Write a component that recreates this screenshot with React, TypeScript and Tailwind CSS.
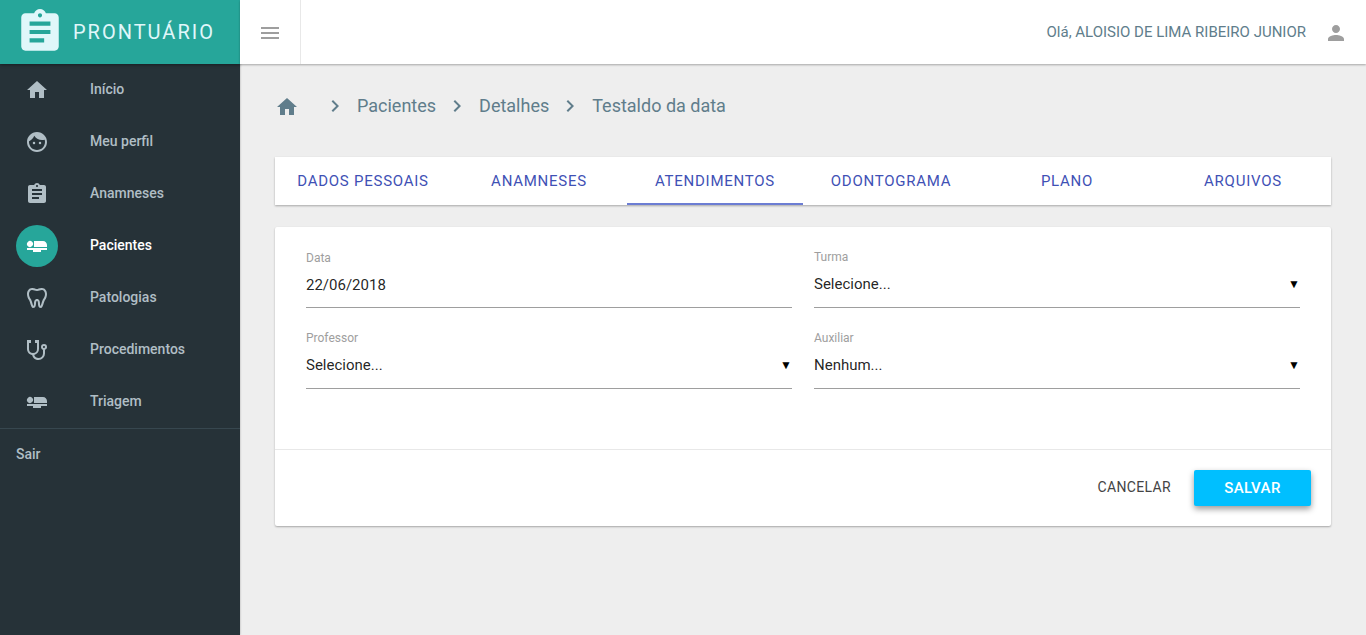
import React from "react";
import {
  MdAirlineSeatFlat,
  MdAssignment,
  MdChevronRight,
  MdFace,
  MdHome,
  MdMenu,
  MdPerson,
} from "react-icons/md";

const ToothIcon = () => (
  <svg viewBox="0 0 24 24" className="size-6" fill="currentColor" aria-hidden="true">
    <path d="M7,2C4,2 2,5 2,8C2,10.11 3,13 4,14C5,15 6,22 8,22C12.54,22 10,15 12,15C14,15 11.46,22 16,22C18,22 19,15 20,14C21,13 22,10.11 22,8C22,5 20,2 17,2C14,2 14,3 12,3C10,3 10,2 7,2M7,4C9,4 10,5 12,5C14,5 15,4 17,4C18.67,4 20,6 20,8C20,9.75 19.14,12.11 18.19,13.06C17.33,13.92 16.06,19.94 15.5,19.94C15.29,19.94 15,18.88 15,17.59C15,15.55 14.43,13 12,13C9.57,13 9,15.55 9,17.59C9,18.88 8.71,19.94 8.5,19.94C7.94,19.94 6.67,13.92 5.81,13.06C4.86,12.11 4,9.75 4,8C4,6 5.33,4 7,4Z" />
  </svg>
);

const StethoscopeIcon = () => (
  <svg viewBox="0 0 24 24" className="size-6" fill="currentColor" aria-hidden="true">
    <path d="M19,8C19.56,8 20,8.43 20,9A1,1 0 0,1 19,10C18.43,10 18,9.55 18,9C18,8.43 18.43,8 19,8M2,2V11C2,13.96 4.19,16.5 7.14,16.91C7.76,19.92 10.42,22 13.5,22A6.5,6.5 0 0,0 20,15.5V11.81C21.16,11.39 22,10.29 22,9A3,3 0 0,0 19,6A3,3 0 0,0 16,9C16,10.29 16.84,11.4 18,11.81V15.41C18,17.91 16,19.91 13.5,19.91C11.5,19.91 9.82,18.7 9.22,16.9C12,16.3 14,13.8 14,11V2H10V5H12V11A4,4 0 0,1 8,15A4,4 0 0,1 4,11V5H6V2H2Z" />
  </svg>
);

const menu = [
  { label: "Início", icon: <MdHome className="size-6" /> },
  { label: "Meu perfil", icon: <MdFace className="size-6" /> },
  { label: "Anamneses", icon: <MdAssignment className="size-6" /> },
  { label: "Pacientes", icon: <MdAirlineSeatFlat className="size-6" />, active: true },
  { label: "Patologias", icon: <ToothIcon /> },
  { label: "Procedimentos", icon: <StethoscopeIcon /> },
  { label: "Triagem", icon: <MdAirlineSeatFlat className="size-6" /> },
];

const crumbs = ["Pacientes", "Detalhes", "Testaldo da data"];

const tabs = ["Dados pessoais", "Anamneses", "Atendimentos", "Odontograma", "Plano", "Arquivos"];

const controlClass =
  "block h-[42px] w-full appearance-none border-b border-[#9e9e9e] bg-transparent pb-1 text-[15px] text-black/87 outline-none";

function SelectField({ id, label, option }: { id: string; label: string; option: string }) {
  return (
    <div>
      <label htmlFor={id} className="block pb-0.5 text-[12px] leading-[14px] text-[#9e9e9e]">
        {label}
      </label>
      <div className="relative">
        <select id={id} className={controlClass}>
          <option>{option}</option>
        </select>
        <span
          aria-hidden="true"
          className="pointer-events-none absolute inset-y-0 right-0 flex items-center pb-1.5 text-[12px] text-black"
        >
          ▼
        </span>
      </div>
    </div>
  );
}

export default function App() {
  return (
    <div className="flex min-h-screen bg-[#eeeeee] font-[Roboto,sans-serif] text-black/87">
      <aside className="flex w-60 shrink-0 flex-col bg-[#263238] text-[14px] font-medium text-[#b0bec5] shadow-[0_0_2px_rgba(0,0,0,0.3)]">
        <a
          href="#"
          className="flex h-16 items-center gap-2 bg-[#26a69a] pl-[15px] text-[#e0f7fa] shadow-[0_1px_3px_rgba(0,0,0,0.4)]"
        >
          <MdAssignment className="size-[50px]" />
          <span className="text-[20px] font-normal tracking-[2px]">PRONTUÁRIO</span>
        </a>
        <nav className="flex flex-col border-b border-[#37474f]">
          {menu.map((item) => (
            <a
              key={item.label}
              href="#"
              className={
                item.active
                  ? "flex h-13 items-center gap-8 pl-4 text-white"
                  : "flex h-13 items-center gap-8 pl-4"
              }
            >
              <span
                className={
                  item.active
                    ? "flex size-[42px] items-center justify-center rounded-full bg-[#26a69a]"
                    : "flex size-[42px] items-center justify-center"
                }
              >
                {item.icon}
              </span>
              <span className="pb-0.5">{item.label}</span>
            </a>
          ))}
        </nav>
        <a href="#" className="flex h-13 items-center px-4 pb-0.5">
          Sair
        </a>
      </aside>

      <div className="flex min-w-0 flex-1 flex-col">
        <header className="flex h-16 items-center justify-between bg-white shadow-[0_1px_2px_rgba(0,0,0,0.3)]">
          <button
            type="button"
            aria-label="Menu"
            className="flex h-full w-[61px] items-center justify-center border-r border-[#e8e8e8] pt-0.5 text-[#9e9e9e]"
          >
            <MdMenu className="size-6" />
          </button>
          <div className="flex items-center gap-[18px] pr-[18px]">
            <span className="text-[15px] text-[#607d8b]">Olá, ALOISIO DE LIMA RIBEIRO JUNIOR</span>
            <button type="button" aria-label="Conta" className="pt-0.5 text-[#9e9e9e]">
              <MdPerson className="size-6" />
            </button>
          </div>
        </header>

        <main className="px-[35px] pt-7">
          <nav aria-label="Navegação" className="flex h-7 items-center text-[18px] text-[#607d8b]">
            <a href="#" aria-label="Início" className="mr-[15px] pt-0.5">
              <MdHome className="size-6" />
            </a>
            {crumbs.map((crumb) => (
              <React.Fragment key={crumb}>
                <MdChevronRight className="mr-2.5 ml-[9px] size-6" />
                <a href="#" className="pb-0.5">
                  {crumb}
                </a>
              </React.Fragment>
            ))}
          </nav>

          <div
            role="tablist"
            className="mt-[37px] grid h-12 grid-cols-6 bg-white shadow-[0_1px_2px_rgba(0,0,0,0.3)]"
          >
            {tabs.map((tab) => (
              <button
                key={tab}
                type="button"
                role="tab"
                aria-selected={tab === "Atendimentos"}
                className={
                  tab === "Atendimentos"
                    ? "border-y-2 border-t-transparent border-b-[#6c7dd3] text-[15px] tracking-wider text-[#3f51b5] uppercase"
                    : "border-y-2 border-transparent text-[15px] tracking-wider text-[#3f51b5] uppercase"
                }
              >
                {tab}
              </button>
            ))}
          </div>

          <form className="mt-[22px] rounded-[2px] bg-white shadow-[0_1px_2px_rgba(0,0,0,0.3)]">
            <div className="grid grid-cols-2 gap-x-[22px] gap-y-[23px] px-[31px] pt-[23px] pb-[60px]">
              <div>
                <label htmlFor="data" className="block text-[12px] leading-4 text-[#9e9e9e]">
                  Data
                </label>
                <input id="data" type="text" defaultValue="22/06/2018" className={controlClass} />
              </div>
              <SelectField id="turma" label="Turma" option="Selecione..." />
              <SelectField id="professor" label="Professor" option="Selecione..." />
              <SelectField id="auxiliar" label="Auxiliar" option="Nenhum..." />
            </div>
            <div className="flex items-center justify-end gap-[23px] border-t border-[#e8e8e8] px-5 py-5">
              <button
                type="button"
                className="h-9 pb-0.5 text-[14px] tracking-wide text-[#444444] uppercase"
              >
                Cancelar
              </button>
              <button
                type="submit"
                className="h-9 w-[117px] rounded-[2px] bg-[#00bfff] text-[15px] font-medium tracking-wide text-white uppercase shadow-[0_3px_6px_rgba(0,0,0,0.4)]"
              >
                Salvar
              </button>
            </div>
          </form>
        </main>
      </div>
    </div>
  );
}
